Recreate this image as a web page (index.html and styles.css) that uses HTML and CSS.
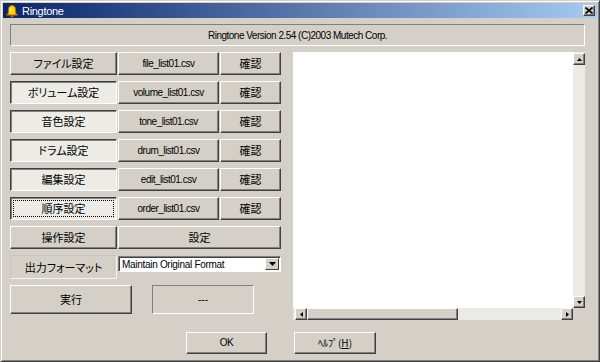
FILE: index.html
```html
<!DOCTYPE html>
<html lang="ja">
<head>
  <meta charset="UTF-8" />
  <title>Ringtone</title>
  <link rel="stylesheet" href="styles.css">
</head>
<body>
  <div class="window">
    <div class="titlebar">
      <svg class="app-icon" width="14" height="14" viewBox="0 0 14 14">
        <path d="M7 1.5 C4.2 1.5 3.4 4 3.4 6.5 L3.2 9.5 L1.5 11 L12.5 11 L10.8 9.5 L10.6 6.5 C10.6 4 9.8 1.5 7 1.5 Z" fill="#f8d800" stroke="#c86400" stroke-width="1"/>
        <circle cx="7" cy="12.3" r="1.3" fill="#c86400"/>
        <rect x="5.2" y="4.5" width="1.2" height="2" fill="#fff"/>
      </svg>
      <span class="title">Ringtone</span>
      <span class="close">
        <svg width="8" height="7" viewBox="0 0 8 7">
          <path d="M0.5 0.5 L7.5 6.5 M7.5 0.5 L0.5 6.5" stroke="#000" stroke-width="1.6"/>
        </svg>
      </span>
    </div>

    <div class="client">
      <div class="banner">Ringtone Version 2.54 (C)2003 Mutech Corp.</div>

      <div class="main">
        <div class="controls">
          <div class="grid">
            <button class="btn">ファイル設定</button>
            <button class="btn latin">file_list01.csv</button>
            <button class="btn">確認</button>

            <button class="btn on">ボリューム設定</button>
            <button class="btn latin">volume_list01.csv</button>
            <button class="btn">確認</button>

            <button class="btn on">音色設定</button>
            <button class="btn latin">tone_list01.csv</button>
            <button class="btn">確認</button>

            <button class="btn on">ドラム設定</button>
            <button class="btn latin">drum_list01.csv</button>
            <button class="btn">確認</button>

            <button class="btn on">編集設定</button>
            <button class="btn latin">edit_list01.csv</button>
            <button class="btn">確認</button>

            <button class="btn on focus">順序設定</button>
            <button class="btn latin">order_list01.csv</button>
            <button class="btn">確認</button>

            <button class="btn">操作設定</button>
            <button class="btn span2">設定</button>

            <div class="static">出力フォーマット</div>
            <div class="select span2">
              <span class="select-text">Maintain Original Format</span>
              <span class="select-arrow">
                <svg width="7" height="4" viewBox="0 0 7 4"><path d="M0 0 H7 L3.5 4 Z" fill="#000"/></svg>
              </span>
            </div>
          </div>

          <div class="run-row">
            <button class="btn run">実行</button>
            <div class="status">---</div>
          </div>
        </div>

        <div class="listbox">
          <div class="list-top">
            <div class="list-white"></div>
            <div class="vscroll">
              <span class="arrow">
                <svg width="5" height="3" viewBox="0 0 5 3"><path d="M2.5 0 L5 3 H0 Z" fill="#000"/></svg>
              </span>
              <span class="track"></span>
              <span class="arrow">
                <svg width="5" height="3" viewBox="0 0 5 3"><path d="M0 0 H5 L2.5 3 Z" fill="#000"/></svg>
              </span>
            </div>
          </div>
          <div class="list-bottom">
            <div class="hscroll">
              <span class="arrow">
                <svg width="3" height="5" viewBox="0 0 3 5"><path d="M0 2.5 L3 0 V5 Z" fill="#000"/></svg>
              </span>
              <span class="thumb"></span>
              <span class="track"></span>
              <span class="arrow">
                <svg width="3" height="5" viewBox="0 0 3 5"><path d="M3 2.5 L0 0 V5 Z" fill="#000"/></svg>
              </span>
            </div>
            <div class="corner"></div>
          </div>
        </div>
      </div>

      <div class="footer">
        <button class="btn footer-btn latin">OK</button>
        <button class="btn footer-btn help">ﾍﾙﾌﾟ(<u>H</u>)</button>
      </div>
    </div>
  </div>
</body>
</html>
```

FILE: styles.css
```css
body {
  margin: 0;
  background: #d4d0c8;
  font-family: "Noto Sans CJK JP", "Liberation Sans", sans-serif;
}
.window {
  width: 600px;
  height: 362px;
  box-sizing: border-box;
  border: 1px solid;
  border-color: #d4d0c8 #404040 #404040 #d4d0c8;
  box-shadow: inset 1px 1px #fff, inset -1px -1px #808080;
  padding: 2px;
  background: #d4d0c8;
}
.titlebar {
  height: 15px;
  display: flex;
  align-items: center;
  background: linear-gradient(to right, #0a246a, #a6caf0);
  padding: 0 2px 0 2px;
}
.app-icon {
  margin-right: 3px;
}
.title {
  color: #fff;
  font: 11px "Liberation Sans", sans-serif;
  letter-spacing: -0.3px;
}
.close {
  margin-left: auto;
  width: 12px;
  height: 11px;
  box-sizing: border-box;
  display: flex;
  align-items: center;
  justify-content: center;
  background: #d4d0c8;
  border: 1px solid;
  border-color: #fff #404040 #404040 #fff;
  box-shadow: inset -1px -1px #808080;
}
.client {
  padding: 6px 12px 0 7px;
}
.banner {
  height: 22px;
  box-sizing: border-box;
  border: 1px solid;
  border-color: #808080 #fff #fff #808080;
  display: flex;
  align-items: center;
  justify-content: center;
  font: 10px "Liberation Sans", sans-serif;
  letter-spacing: -0.5px;
  color: #000;
}
.main {
  margin-top: 6px;
  display: flex;
  gap: 12px;
}
.controls {
  width: 271px;
}
.grid {
  display: grid;
  grid-template-columns: 107px 101px 61px;
  grid-auto-rows: 23px;
  column-gap: 1px;
  row-gap: 6px;
}
.btn {
  font-family: "Noto Sans CJK JP", sans-serif;
  font-size: 11px;
  font-feature-settings: "palt";
  color: #000;
  background: #d4d0c8;
  border: 1px solid;
  border-color: #fff #404040 #404040 #fff;
  box-shadow: inset -1px -1px #808080;
  padding: 0;
  margin: 0;
  line-height: 1;
}
.btn.latin {
  font-family: "Liberation Sans", sans-serif;
  font-size: 10px;
  letter-spacing: -0.5px;
}
.btn.on {
  background: #ecebe6;
  border-color: #404040 #fff #fff #404040;
  box-shadow: inset 1px 1px #808080;
}
.btn.focus {
  outline: 1px dotted #000;
  outline-offset: -4px;
}
.span2 {
  grid-column: span 2;
}
.static {
  height: 24px;
  box-sizing: border-box;
  border: 1px solid;
  border-color: #c8c4bc #f4f3ef #f4f3ef #c8c4bc;
  display: flex;
  align-items: center;
  justify-content: center;
  font-size: 11px;
  font-feature-settings: "palt";
}
.select {
  height: 16px;
  margin-top: 1px;
  box-sizing: border-box;
  display: flex;
  background: #fff;
  border: 1px solid;
  border-color: #808080 #fff #fff #808080;
  box-shadow: inset 1px 1px #404040;
}
.select-text {
  flex: 1;
  padding: 1px 0 0 3px;
  font: 10px "Liberation Sans", sans-serif;
  letter-spacing: -0.3px;
  line-height: 13px;
}
.select-arrow {
  width: 14px;
  box-sizing: border-box;
  margin: 1px 1px 1px 0;
  display: flex;
  align-items: center;
  justify-content: center;
  background: #d4d0c8;
  border: 1px solid;
  border-color: #fff #404040 #404040 #fff;
}
.run-row {
  display: flex;
  margin-top: 7px;
}
.btn.run {
  width: 122px;
  height: 29px;
}
.status {
  width: 102px;
  height: 29px;
  margin-left: 20px;
  box-sizing: border-box;
  border: 1px solid;
  border-color: #808080 #fff #fff #808080;
  display: flex;
  align-items: center;
  justify-content: center;
  font: 10px "Liberation Sans", sans-serif;
}
.listbox {
  width: 292px;
  height: 268px;
  display: flex;
  flex-direction: column;
}
.list-top {
  flex: 1;
  display: flex;
}
.list-white {
  flex: 1;
  background: #fff;
}
.vscroll {
  width: 12px;
  display: flex;
  flex-direction: column;
  background: #eceae4;
  padding-top: 1px;
}
.arrow {
  width: 12px;
  height: 12px;
  box-sizing: border-box;
  display: flex;
  align-items: center;
  justify-content: center;
  background: #d4d0c8;
  border: 1px solid;
  border-color: #fff #404040 #404040 #fff;
  box-shadow: inset -1px -1px #808080;
}
.vscroll .track,
.hscroll .track {
  flex: 1;
}
.list-bottom {
  height: 12px;
  display: flex;
}
.hscroll {
  flex: 1;
  display: flex;
  background: #eceae4;
  padding-left: 2px;
}
.thumb {
  width: 151px;
  box-sizing: border-box;
  background: #d4d0c8;
  border: 1px solid;
  border-color: #fff #404040 #404040 #fff;
  box-shadow: inset -1px -1px #808080;
}
.corner {
  width: 12px;
  background: #d4d0c8;
}
.footer {
  margin-top: 12px;
  display: flex;
  gap: 27px;
  padding-left: 176px;
}
.footer-btn {
  width: 81px;
  height: 22px;
}
.btn.help {
  width: 82px;
  font-size: 10px;
}
```
